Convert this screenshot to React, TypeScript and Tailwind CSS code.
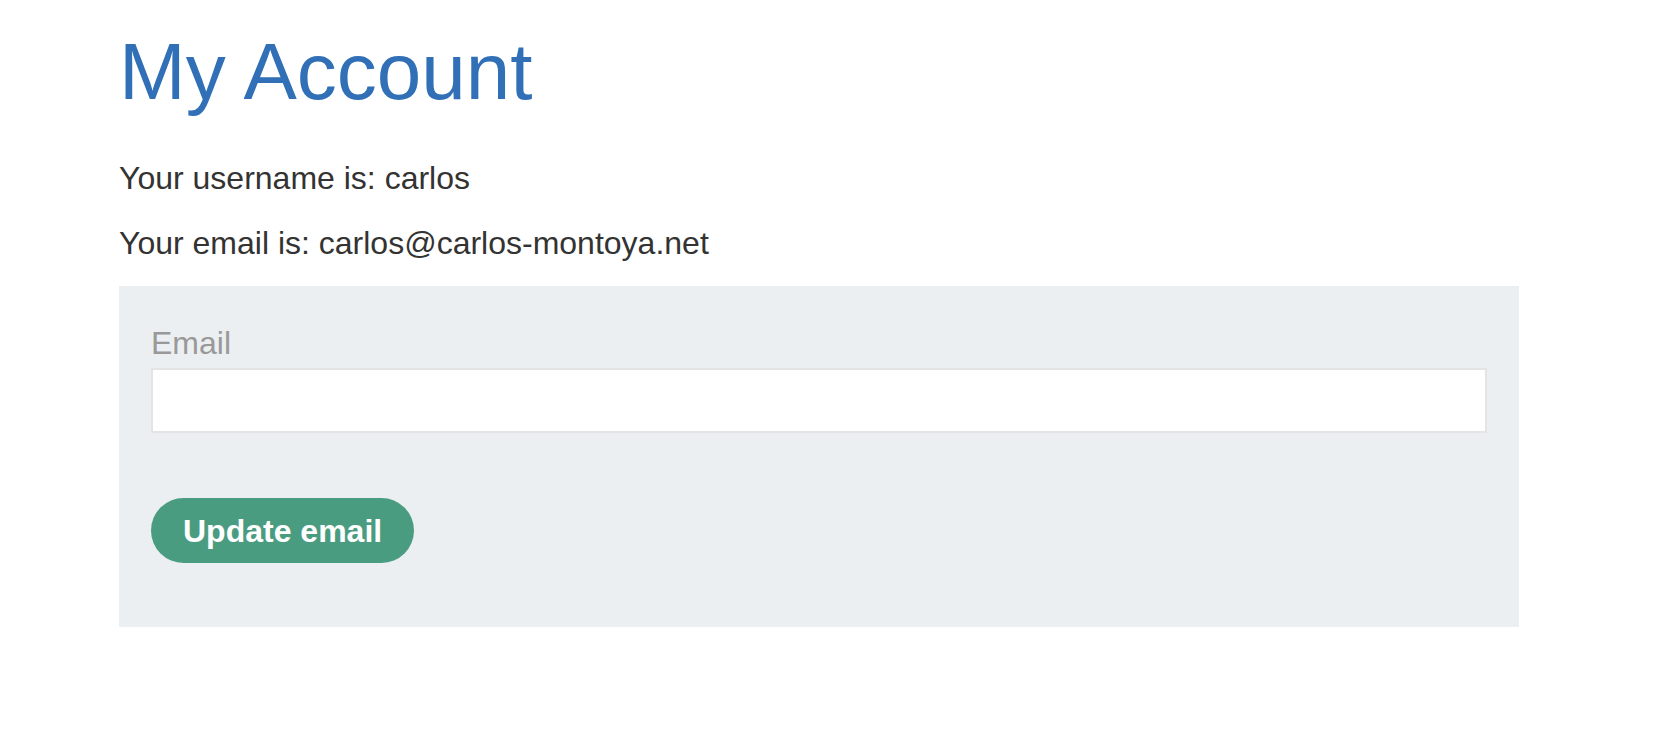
import React from "react";

export default function App() {
  return (
    <div
      className="min-h-[748px] w-[1654px] bg-white pl-[119px]"
      style={{ fontFamily: '"Liberation Sans", Arial, Helvetica, sans-serif' }}
    >
      <h1 className="pt-[28px] text-[80px] leading-[88px] font-normal text-[#3170b7]">
        My Account
      </h1>
      <p className="mt-[44px] text-[32px] leading-[36px] text-[#333332]">
        Your username is: carlos
      </p>
      <p className="mt-[29px] text-[32px] leading-[36px] text-[#333332]">
        Your email is: carlos@carlos-montoya.net
      </p>
      <form
        className="mt-[25px] flex w-[1400px] flex-col bg-[#ebeff2] px-[32px] pt-[39px] pb-[64px]"
        onSubmit={(e) => e.preventDefault()}
      >
        <label className="text-[32px] leading-[36px] text-[#999999]">Email</label>
        <input
          type="email"
          className="mt-[7px] h-[65px] w-full border-2 border-[#e4e4e4] bg-white px-3 text-[32px] outline-none"
        />
        <div className="mt-[65px]">
          <button
            type="submit"
            className="h-[65px] rounded-full bg-[#4a9c81] px-[32px] text-[32px] font-bold leading-none text-white"
          >
            Update email
          </button>
        </div>
      </form>
    </div>
  );
}
